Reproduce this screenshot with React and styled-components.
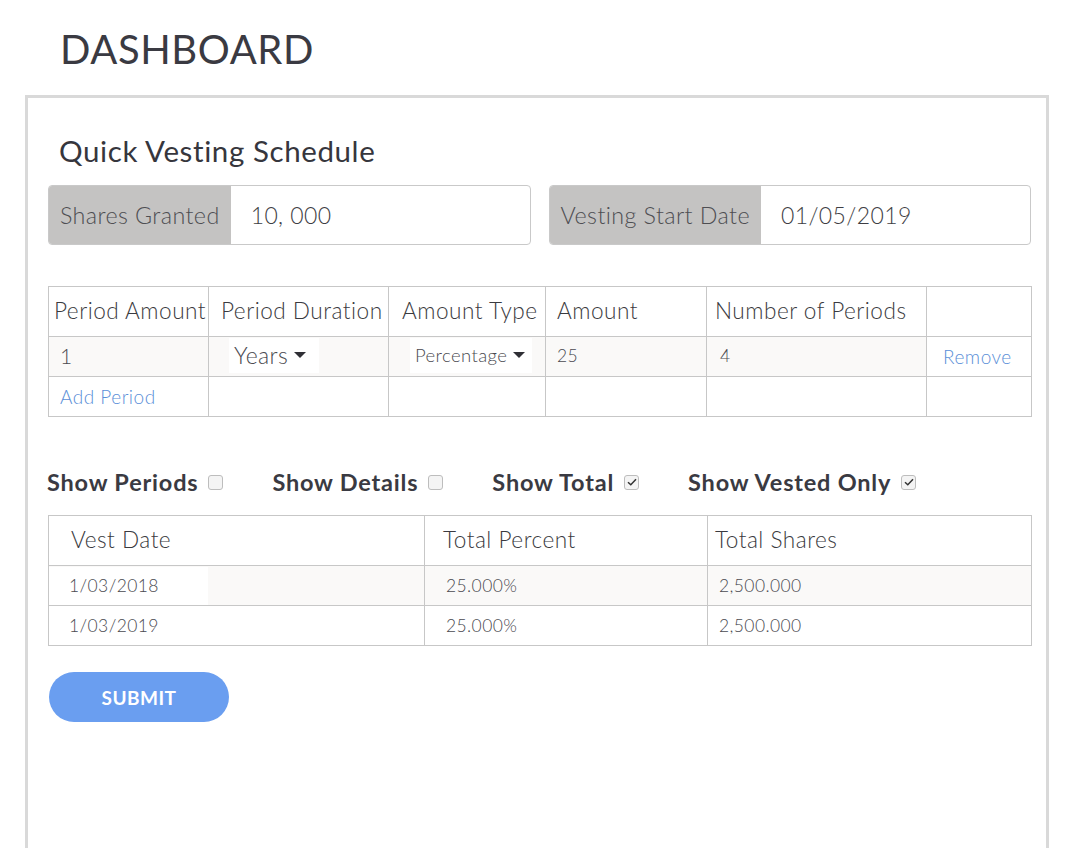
import React from 'react'
import styled, { createGlobalStyle } from 'styled-components'

const GlobalStyle = createGlobalStyle`
    body {
        margin: 0;
        background: #ffffff;
        font-family: Lato, "Open Sans", sans-serif;
        color: #3b3b43;
    }
`

const periodCols = [160, 180, 157, 161, 220, 105]
const resultCols = [376, 283, 324]

const periods = [
    { amount: '1', duration: 'Years', type: 'Percentage', value: '25', count: '4' },
]

const results = [
    { date: '1/03/2018', percent: '25.000%', shares: '2,500.000' },
    { date: '1/03/2019', percent: '25.000%', shares: '2,500.000' },
]

const toggles = [
    { label: 'Show Periods', checked: false },
    { label: 'Show Details', checked: false },
    { label: 'Show Total', checked: true },
    { label: 'Show Vested Only', checked: true },
]

function CheckBox({ checked }) {
    return (
        <Box>
            {checked && (
                <svg width="10" height="8" viewBox="0 0 10 8">
                    <path d="M1 4.2 L3.8 6.8 L9 1.2" fill="none" stroke="#333" strokeWidth="1.5" />
                </svg>
            )}
        </Box>
    )
}

function Caret() {
    return (
        <svg width="12" height="6" viewBox="0 0 12 6">
            <path d="M0 0 L12 0 L6 6 Z" fill="#2f2f35" />
        </svg>
    )
}

function App() {
    return (
        <>
            <GlobalStyle />
            <Title>DASHBOARD</Title>
            <Panel>
                <Heading>Quick Vesting Schedule</Heading>
                <InputRow>
                    <InputGroup>
                        <InputLabel>Shares Granted</InputLabel>
                        <InputValue>10, 000</InputValue>
                    </InputGroup>
                    <InputGroup>
                        <InputLabel>Vesting Start Date</InputLabel>
                        <InputValue>01/05/2019</InputValue>
                    </InputGroup>
                </InputRow>

                <Table>
                    <colgroup>
                        {periodCols.map((w, i) => <col key={i} style={{ width: w }} />)}
                    </colgroup>
                    <thead>
                        <tr>
                            <HeadCell pad={5}>Period Amount</HeadCell>
                            <HeadCell pad={12}>Period Duration</HeadCell>
                            <HeadCell pad={13}>Amount Type</HeadCell>
                            <HeadCell pad={11}>Amount</HeadCell>
                            <HeadCell pad={8}>Number of Periods</HeadCell>
                            <HeadCell />
                        </tr>
                    </thead>
                    <tbody>
                        {periods.map((p, i) => (
                            <PeriodRow key={i}>
                                <Cell pad={11} lift>{p.amount}</Cell>
                                <Cell pad={20} lift>
                                    <Select size="big">{p.duration}<Caret /></Select>
                                </Cell>
                                <Cell pad={21} lift>
                                    <Select>{p.type}<Caret /></Select>
                                </Cell>
                                <Cell pad={11} lift small>{p.value}</Cell>
                                <Cell pad={13} lift small>{p.count}</Cell>
                                <Cell pad={16} lift plain><LinkText>Remove</LinkText></Cell>
                            </PeriodRow>
                        ))}
                        <tr>
                            <Cell pad={11} lift plain><LinkText>Add Period</LinkText></Cell>
                            <Cell plain />
                            <Cell plain />
                            <Cell plain />
                            <Cell plain />
                            <Cell plain />
                        </tr>
                    </tbody>
                </Table>

                <Toggles>
                    {toggles.map(t => (
                        <Toggle key={t.label}>
                            {t.label}
                            <CheckBox checked={t.checked} />
                        </Toggle>
                    ))}
                </Toggles>

                <Table>
                    <colgroup>
                        {resultCols.map((w, i) => <col key={i} style={{ width: w }} />)}
                    </colgroup>
                    <thead>
                        <tr>
                            <HeadCell pad={22}>Vest Date</HeadCell>
                            <HeadCell pad={18}>Total Percent</HeadCell>
                            <HeadCell pad={7}>Total Shares</HeadCell>
                        </tr>
                    </thead>
                    <tbody>
                        {results.map((r, i) => (
                            <ResultRow key={r.date} shaded={i === 0}>
                                <Cell pad={20} small>
                                    <DateField>{r.date}</DateField>
                                </Cell>
                                <Cell pad={21} small>{r.percent}</Cell>
                                <Cell pad={11} small>{r.shares}</Cell>
                            </ResultRow>
                        ))}
                    </tbody>
                </Table>

                <SubmitButton>SUBMIT</SubmitButton>
            </Panel>
        </>
    )
}

export default App

const Title = styled.h1`
    margin: 0;
    padding: 29px 0 0 60px;
    height: 95px;
    box-sizing: border-box;
    font-size: 40px;
    font-weight: 400;
    letter-spacing: 0.6px;
    line-height: 40px;
    color: #3a3a42;
`

const Panel = styled.div`
    margin-left: 25px;
    width: 1024px;
    height: calc(100vh - 95px);
    box-sizing: border-box;
    border: 3px solid #d9d9d9;
    border-bottom: none;
    padding: 37px 15px 0 20px;
    overflow: hidden;
`

const Heading = styled.h2`
    margin: 0 0 18px 11px;
    font-size: 29.5px;
    line-height: 32px;
    font-weight: 400;
    letter-spacing: 0.6px;
    color: #36363d;
`

const InputRow = styled.div`
    display: flex;
    gap: 18px;
    margin-bottom: 41px;
`

const InputGroup = styled.div`
    flex: 1;
    display: flex;
    height: 60px;
    border: 1px solid #c9c9c9;
    border-radius: 4px;
    overflow: hidden;
    box-sizing: border-box;
`

const InputLabel = styled.div`
    display: flex;
    align-items: center;
    padding: 0 11px;
    background: #c4c3c2;
    font-size: 23.3px;
    font-weight: 300;
    letter-spacing: 0.4px;
    color: #4e4e52;
`

const InputValue = styled.div`
    display: flex;
    align-items: center;
    padding-left: 20px;
    font-size: 23px;
    font-weight: 300;
    letter-spacing: 0.4px;
    color: #3e3e44;
`

const Table = styled.table`
    width: 983px;
    border-collapse: collapse;
    table-layout: fixed;
`

const HeadCell = styled.th`
    height: 50px;
    padding: 0 0 2px ${p => p.pad || 0}px;
    border: 1px solid #c7c7c7;
    text-align: left;
    font-size: 22.6px;
    font-weight: 300;
    letter-spacing: 0.5px;
    color: #3a3a40;
    white-space: nowrap;
    overflow: hidden;
    box-sizing: border-box;
`

const PeriodRow = styled.tr`
    background: #faf9f8;
`

const ResultRow = styled.tr`
    background: ${p => (p.shaded ? '#faf9f8' : '#ffffff')};
`

const Cell = styled.td`
    height: 40px;
    padding: 0 0 ${p => (p.lift ? 3 : 0)}px ${p => p.pad || 0}px;
    border: 1px solid #c7c7c7;
    font-size: ${p => (p.small ? 17.5 : 21)}px;
    font-weight: 300;
    letter-spacing: 0.4px;
    color: #4a4a50;
    white-space: nowrap;
    box-sizing: border-box;
    ${p => p.plain && 'background: #ffffff;'}
`

const Select = styled.span`
    display: inline-flex;
    align-items: center;
    gap: 6px;
    height: 35px;
    padding: 0 ${p => (p.size === 'big' ? 13 : 7)}px 0 5px;
    background: #ffffff;
    font-size: ${p => (p.size === 'big' ? 23 : 18.5)}px;
    color: #4a4a50;
`

const LinkText = styled.span`
    font-size: 19px;
    font-weight: 300;
    letter-spacing: 0.5px;
    color: #5b8fd8;
`

const DateField = styled.span`
    display: inline-block;
    width: 139px;
    line-height: 38px;
    margin-left: -20px;
    padding-left: 20px;
    background: #ffffff;
    vertical-align: middle;
`

const Toggles = styled.div`
    display: flex;
    align-items: center;
    gap: 49px;
    margin: 51px 0 19px -1px;
`

const Toggle = styled.label`
    display: flex;
    align-items: center;
    gap: 10px;
    font-size: 23.5px;
    font-weight: 700;
    letter-spacing: 0.8px;
    color: #3a3a42;
`

const Box = styled.span`
    display: inline-flex;
    align-items: center;
    justify-content: center;
    width: 13px;
    height: 13px;
    border: 1.5px solid #bdbdbd;
    border-radius: 3px;
    background: #f4f4f4;
`

const SubmitButton = styled.button`
    display: block;
    margin: 26px 0 0 1px;
    width: 180px;
    height: 50px;
    border: none;
    border-radius: 25px;
    background: #6a9ef0;
    color: #ffffff;
    font-family: Lato, sans-serif;
    font-size: 19px;
    font-weight: 700;
    letter-spacing: 0.5px;
    cursor: pointer;
`
